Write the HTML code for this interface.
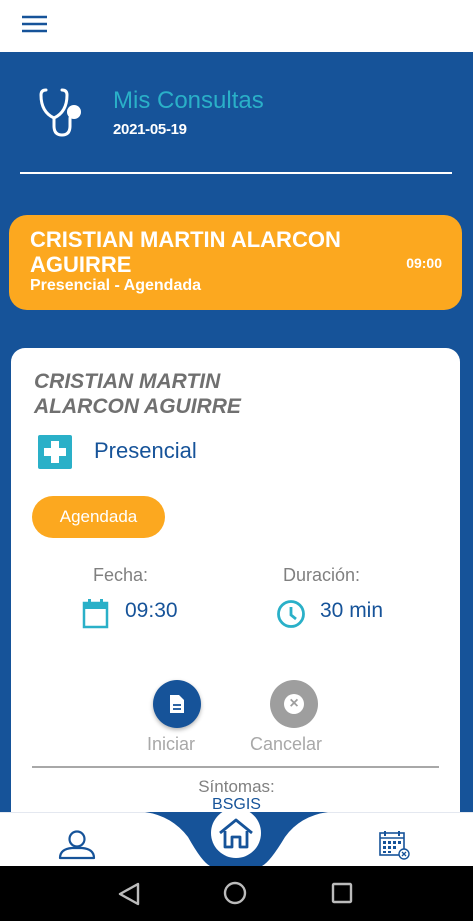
<!DOCTYPE html>
<html><head><meta charset="utf-8"><style>
*{margin:0;padding:0;box-sizing:border-box}
body{width:473px;height:921px;overflow:hidden;font-family:"Liberation Sans",sans-serif;background:#165399;position:relative}
.abs{position:absolute}
</style></head><body>
<div class="abs" style="left:0;top:0;width:473px;height:52px;background:#fff"></div>
<svg class="abs" style="left:22px;top:15px" width="25" height="18"><g stroke="#165399" stroke-width="2.6"><line x1="0" y1="2" x2="25" y2="2"/><line x1="0" y1="9" x2="25" y2="9"/><line x1="0" y1="16" x2="25" y2="16"/></g></svg>

<svg class="abs" style="left:38px;top:86px" width="46" height="52" viewBox="0 0 46 52"><g fill="none" stroke="#fff" stroke-width="3" stroke-linecap="round"><path d="M8 4 Q3 4 3 9 Q3 26 16 32 Q29 26 29 9 Q29 4 24 4"/><path d="M16 32 V40 Q16 49 24 49 Q32 49 32 40 V32"/></g><circle cx="36" cy="26" r="7" fill="#fff"/></svg>
<div class="abs" style="left:113px;top:87px;color:#2ab0c8;font-size:24px">Mis Consultas</div>
<div class="abs" style="left:113px;top:121px;color:#fff;font-size:15px;font-weight:bold;letter-spacing:-0.3px">2021-05-19</div>
<div class="abs" style="left:20px;top:172px;width:432px;height:2px;background:#fff"></div>

<div class="abs" style="left:9px;top:215px;width:453px;height:95px;background:#fca81f;border-radius:18px;color:#fff">
<div class="abs" style="left:21px;top:12px;font-size:22px;line-height:25px;font-weight:bold;width:360px">CRISTIAN MARTIN ALARCON AGUIRRE</div>
<div class="abs" style="left:21px;top:62px;font-size:16px;font-weight:bold">Presencial - Agendada</div>
<div class="abs" style="right:20px;top:40px;font-size:14px;font-weight:bold">09:00</div>
</div>

<div class="abs" style="left:11px;top:348px;width:449px;height:520px;background:#fff;border-radius:14px"></div>
<div class="abs" style="left:34px;top:369px;color:#707070;font-size:21px;line-height:25px;font-style:italic;font-weight:bold">CRISTIAN MARTIN<br>ALARCON AGUIRRE</div>
<div class="abs" style="left:38px;top:435px;width:34px;height:34px;background:#2ab0c8;border-radius:2px"></div>
<div class="abs" style="left:51px;top:441px;width:8px;height:22px;background:#fff"></div>
<div class="abs" style="left:44px;top:448px;width:22px;height:8px;background:#fff"></div>
<div class="abs" style="left:94px;top:438px;color:#165399;font-size:22px">Presencial</div>
<div class="abs" style="left:32px;top:496px;width:133px;height:42px;background:#fca81f;border-radius:21px;color:#fff;font-size:17px;text-align:center;line-height:42px">Agendada</div>

<div class="abs" style="left:93px;top:565px;color:#808080;font-size:18px">Fecha:</div>
<div class="abs" style="left:283px;top:565px;color:#808080;font-size:18px">Duración:</div>
<svg class="abs" style="left:82px;top:598px" width="27" height="31" viewBox="0 0 27 31"><rect x="2" y="5" width="23" height="24" fill="none" stroke="#2ab0c8" stroke-width="2.5"/><rect x="2" y="5" width="23" height="6" fill="#2ab0c8"/><rect x="6" y="1" width="3" height="6" fill="#2ab0c8"/><rect x="18" y="1" width="3" height="6" fill="#2ab0c8"/></svg>
<div class="abs" style="left:125px;top:599px;color:#165399;font-size:21px">09:30</div>
<svg class="abs" style="left:276px;top:599px" width="30" height="30" viewBox="0 0 30 30"><circle cx="15" cy="15" r="12.5" fill="none" stroke="#2ab0c8" stroke-width="2.8"/><path d="M15 8 V16 L20 20" fill="none" stroke="#2ab0c8" stroke-width="2.8"/></svg>
<div class="abs" style="left:320px;top:599px;color:#165399;font-size:21px">30 min</div>

<div class="abs" style="left:153px;top:680px;width:48px;height:48px;border-radius:50%;background:#165399;box-shadow:0 2px 4px rgba(0,0,0,.3)"></div>
<svg class="abs" style="left:169px;top:694px" width="16" height="20" viewBox="0 0 16 20"><path d="M1 1 H10 L15 6 V19 H1 Z" fill="#fff"/><g stroke="#165399" stroke-width="1.8"><line x1="4" y1="11" x2="12" y2="11"/><line x1="4" y1="15" x2="12" y2="15"/></g></svg>
<div class="abs" style="left:270px;top:680px;width:48px;height:48px;border-radius:50%;background:#9e9e9e"></div>
<div class="abs" style="left:284px;top:694px;width:20px;height:20px;border-radius:50%;background:#fff;color:#9e9e9e;font-size:16px;font-weight:bold;text-align:center;line-height:20px">×</div>
<div class="abs" style="left:147px;top:734px;color:#a8a8a8;font-size:18px">Iniciar</div>
<div class="abs" style="left:250px;top:734px;color:#a8a8a8;font-size:18px">Cancelar</div>
<div class="abs" style="left:32px;top:766px;width:407px;height:2px;background:#a8a8a8"></div>
<div class="abs" style="left:0;width:473px;top:777px;text-align:center;color:#808080;font-size:17px">Síntomas:</div>
<div class="abs" style="left:0;width:473px;top:796px;text-align:center;color:#165399;font-size:16px">BSGIS</div>

<div class="abs" style="left:0;top:812px;width:473px;height:54px;background:#fff;border-top:1px solid #e4e8f0"></div>
<svg class="abs" style="left:0;top:812px" width="473" height="54"><path d="M145 0 H328 Q300 4 285 25 Q270 50 262 54 H210 Q202 50 188 25 Q172 4 145 0 Z" fill="#165399"/><circle cx="236" cy="21" r="25" fill="#fff"/></svg>
<svg class="abs" style="left:218px;top:818px" width="36" height="32" viewBox="0 0 36 32"><path d="M2 15 L18 2 L34 15" fill="none" stroke="#165399" stroke-width="2.8" stroke-linejoin="round"/><path d="M7 13 V29 H14 V19 H22 V29 H29 V13" fill="none" stroke="#165399" stroke-width="2.8" stroke-linejoin="round"/></svg>
<svg class="abs" style="left:58px;top:830px" width="38" height="30" viewBox="0 0 38 30"><circle cx="19" cy="9" r="7.5" fill="none" stroke="#165399" stroke-width="2.2"/><path d="M2 28 Q2 19 14 18 H24 Q36 19 36 28 Z" fill="none" stroke="#165399" stroke-width="2.2" stroke-linejoin="round"/></svg>
<svg class="abs" style="left:379px;top:830px" width="32" height="30" viewBox="0 0 32 30"><rect x="1" y="3" width="24" height="22" fill="none" stroke="#165399" stroke-width="1.6"/><line x1="1" y1="8" x2="25" y2="8" stroke="#165399" stroke-width="1.6"/><g fill="#165399"><rect x="5" y="1" width="2" height="5"/><rect x="19" y="1" width="2" height="5"/><rect x="4" y="11" width="3" height="3"/><rect x="9" y="11" width="3" height="3"/><rect x="14" y="11" width="3" height="3"/><rect x="19" y="11" width="3" height="3"/><rect x="4" y="16" width="3" height="3"/><rect x="9" y="16" width="3" height="3"/><rect x="14" y="16" width="3" height="3"/><rect x="4" y="21" width="3" height="2"/><rect x="9" y="21" width="3" height="2"/></g><circle cx="25" cy="24" r="5" fill="#fff" stroke="#165399" stroke-width="1.4"/><path d="M23 22 L27 26 M27 22 L23 26" stroke="#165399" stroke-width="1.3"/></svg>

<div class="abs" style="left:0;top:866px;width:473px;height:55px;background:#000"></div>
<svg class="abs" style="left:0;top:866px" width="473" height="55"><path d="M138 18 L120 28 L138 38 Z" fill="none" stroke="#bbb" stroke-width="2.4" stroke-linejoin="round"/><circle cx="235" cy="27" r="10" fill="none" stroke="#bbb" stroke-width="2.4"/><rect x="333" y="18" width="18" height="18" rx="1" fill="none" stroke="#bbb" stroke-width="2.4"/></svg>
</body></html>
